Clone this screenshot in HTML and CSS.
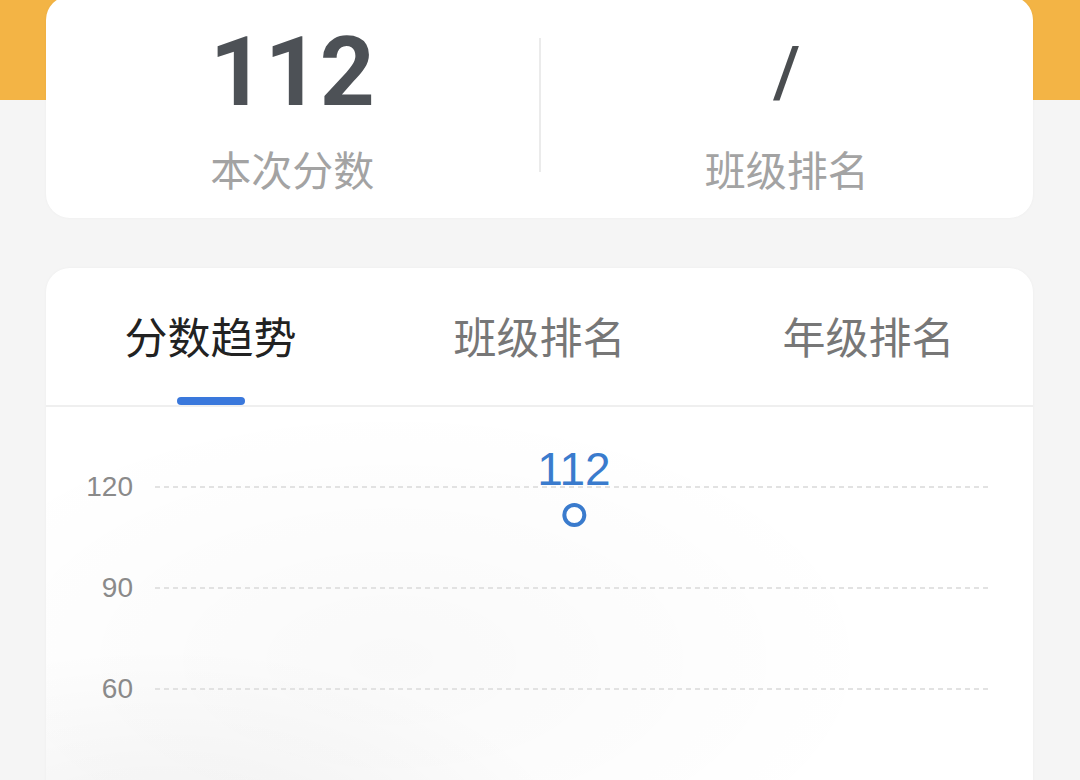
FILE: index.html
```html
<!DOCTYPE html>
<html lang="zh-CN">
<head>
<meta charset="utf-8">
<title>成绩详情</title>
<link rel="stylesheet" href="styles.css">
</head>
<body>
<div class="page">
  <section class="card summary">
    <div class="stat">
      <div class="stat-value">112</div>
      <div class="stat-label">本次分数</div>
    </div>
    <div class="divider"></div>
    <div class="stat">
      <div class="stat-value"><span class="slash">/</span></div>
      <div class="stat-label">班级排名</div>
    </div>
  </section>

  <section class="card trend">
    <div class="tabs">
      <div class="tab active">分数趋势</div>
      <div class="tab">班级排名</div>
      <div class="tab">年级排名</div>
    </div>
    <div class="chart">
      <div class="grid-row"><span class="axis">120</span><span class="gridline"></span></div>
      <div class="grid-row"><span class="axis">90</span><span class="gridline"></span></div>
      <div class="grid-row"><span class="axis">60</span><span class="gridline"></span></div>
      <div class="grid-row"><span class="axis">30</span><span class="gridline"></span></div>
      <div class="point">
        <span class="point-value">112</span>
        <span class="dot"></span>
      </div>
    </div>
  </section>
</div>
</body>
</html>
```

FILE: styles.css
```css
html, body {
  margin: 0;
  height: 780px;
  overflow: hidden;
  background: #f5f5f5;
}

.page {
  display: flow-root;
  height: 780px;
  box-sizing: border-box;
  padding: 0 47px 0 46px;
  background: linear-gradient(to bottom, #f3b445 0, #f3b445 100px, #f5f5f5 100px);
  font-family: "Noto Sans CJK SC", "Noto Sans", sans-serif;
}

.card {
  background: #fff;
  border-radius: 24px;
  box-shadow: 0 0 3px rgba(0, 0, 0, 0.04);
}

.summary {
  display: flex;
  height: 222px;
  margin-top: -4px;
  box-sizing: border-box;
}

.stat {
  flex: 1;
  display: flex;
  flex-direction: column;
  align-items: center;
  padding-top: 28px;
}

.stat-value {
  font-family: Roboto, "Liberation Sans", sans-serif;
  font-weight: 700;
  font-size: 96px;
  line-height: 96px;
  height: 96px;
  color: #4d5156;
}

.slash {
  font-weight: 500;
  font-size: 70px;
  color: #4a4d50;
  vertical-align: 13px;
}

.stat-label {
  margin-top: 28px;
  font-size: 41px;
  line-height: 41px;
  color: #a3a3a3;
}

.divider {
  align-self: center;
  width: 2px;
  height: 134px;
  margin-top: -4px;
  background: #ebebeb;
}

.trend {
  margin-top: 50px;
  height: 600px;
  overflow: hidden;
  border-bottom-left-radius: 0;
  border-bottom-right-radius: 0;
}

.tabs {
  display: grid;
  grid-template-columns: repeat(3, 1fr);
  height: 137px;
  border-bottom: 2px solid #efefef;
}

.tab {
  position: relative;
  text-align: center;
  padding-top: 46px;
  font-size: 43px;
  line-height: 43px;
  color: #777;
}

.tab.active {
  color: #222;
}

.tab.active::after {
  content: "";
  position: absolute;
  left: 50%;
  bottom: 0;
  width: 68px;
  height: 8px;
  margin-left: -34px;
  border-radius: 4px;
  background: #3a78dc;
}

.chart {
  position: relative;
  height: 460px;
  box-sizing: border-box;
  padding-top: 29px;
  background:
    radial-gradient(ellipse 420px 220px at 12% 100%, rgba(0, 0, 0, 0.055), rgba(0, 0, 0, 0) 100%),
    radial-gradient(ellipse 500px 260px at 35% 55%, rgba(0, 0, 0, 0.025), rgba(0, 0, 0, 0) 100%);
}

.grid-row {
  display: flex;
  align-items: center;
  height: 101px;
}

.axis {
  width: 87px;
  text-align: right;
  font-family: "Liberation Sans", Arial, sans-serif;
  font-size: 28px;
  line-height: 28px;
  color: #8a8a8a;
}

.gridline {
  flex: 1;
  height: 2px;
  margin-left: 22px;
  margin-right: 43px;
  background: repeating-linear-gradient(to right, #e2e2e2 0, #e2e2e2 5px, transparent 5px, transparent 9px);
}

.point {
  position: absolute;
  left: 528px;
  top: 39px;
  transform: translateX(-50%);
  display: flex;
  flex-direction: column;
  align-items: center;
}

.point-value {
  font-family: "Liberation Sans", Arial, sans-serif;
  font-size: 46px;
  line-height: 46px;
  color: #3a7bcd;
}

.dot {
  width: 24px;
  height: 24px;
  margin-top: 11px;
  box-sizing: border-box;
  border: 4px solid #3a7bcd;
  border-radius: 50%;
  background: #fff;
}
```
